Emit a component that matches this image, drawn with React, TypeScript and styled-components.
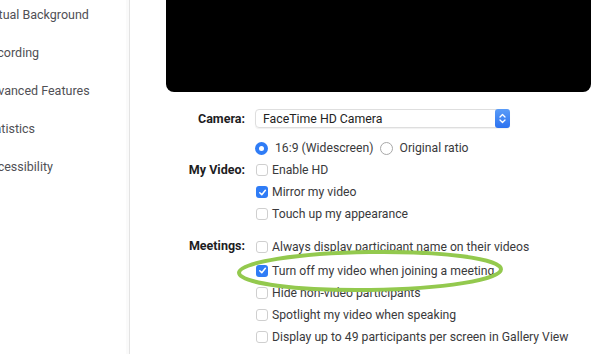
import React from "react";
import styled, { createGlobalStyle } from "styled-components";

const Global = createGlobalStyle`
  html, body { margin: 0; padding: 0; background: #ffffff; }
  body { width: 600px; height: 354px; overflow: hidden; font-family: Roboto, Inter, "Liberation Sans", sans-serif; }
  #root { width: 600px; height: 354px; }
`;

const Window = styled.div`
  display: flex;
  width: 600px;
  height: 354px;
  overflow: hidden;
  background: #fff;
`;

const Sidebar = styled.nav`
  width: 129px;
  flex: none;
  border-right: 1px solid #e3e3e3;
  overflow: hidden;
  box-shadow: inset -3px 0 0 #fafafa;
`;

const NavList = styled.ul`
  list-style: none;
  margin: -5px 0 0 -17px;
  padding: 0;
`;

const NavItem = styled.li`
  height: 38px;
  display: flex;
  align-items: center;
  font-size: 12.5px;
  color: #505055;
  white-space: nowrap;
`;

const Main = styled.main`
  position: relative;
  flex: 1;
  display: flex;
  flex-direction: column;
  padding-left: 36px;
  padding-right: 9px;
`;

const Preview = styled.div`
  height: 92px;
  background: #000;
  border-radius: 0 0 8px 8px;
`;

const Form = styled.div`
  display: grid;
  grid-template-columns: 79px 1fr;
  column-gap: 10px;
  margin-top: 16px;
  color: #333;
`;

const Label = styled.div<{ $top?: number }>`
  font-weight: 700;
  color: #1d1d1f;
  text-align: right;
  font-size: 12.5px;
  height: 22px;
  line-height: 22px;
  margin-top: ${(p) => p.$top ?? 0}px;
`;

const Controls = styled.div<{ $top?: number }>`
  display: flex;
  flex-direction: column;
  margin-top: ${(p) => p.$top ?? 0}px;
`;

const Select = styled.div`
  width: 255px;
  height: 19px;
  border: 1px solid #dedede;
  border-radius: 4px;
  display: flex;
  align-items: center;
  justify-content: space-between;
  padding-left: 7px;
  box-sizing: border-box;
  font-size: 12.3px;
  color: #222;
  box-shadow: 0 1px 1px rgba(0,0,0,0.06);
  margin: 1px 0 0;
`;

const Stepper = styled.div`
  width: 15px;
  height: 19px;
  margin-right: -1px;
  background: linear-gradient(#5a9cf8, #2c72f0);
  border-radius: 3px;
  display: flex;
  align-items: center;
  justify-content: center;
`;

const Row = styled.div<{ $h?: number }>`
  display: flex;
  align-items: center;
  height: ${(p) => p.$h ?? 22}px;
  white-space: nowrap;
  color: #3a3a3c;
  font-size: 12.2px;
`;

const Box = styled.span<{ $on?: boolean }>`
  width: 12px;
  height: 12px;
  box-sizing: border-box;
  border-radius: 3px;
  margin: 0 4px 0 1px;
  flex: none;
  display: flex;
  align-items: center;
  justify-content: center;
  border: ${(p) => (p.$on ? "none" : "1px solid #cfcfcf")};
  background: ${(p) => (p.$on ? "#2f7cf6" : "#fff")};
`;

const Radio = styled.span<{ $on?: boolean; $gap?: number }>`
  width: 13px;
  height: 13px;
  box-sizing: border-box;
  border-radius: 50%;
  margin: 0 7px 0 ${(p) => p.$gap ?? 0}px;
  flex: none;
  display: flex;
  align-items: center;
  justify-content: center;
  border: ${(p) => (p.$on ? "none" : "1px solid #a8a8a8")};
  background: ${(p) => (p.$on ? "#2f7cf6" : "#fff")};
  &::after {
    content: "";
    display: ${(p) => (p.$on ? "block" : "none")};
    width: 5px;
    height: 5px;
    border-radius: 50%;
    background: #fff;
  }
`;

const Highlight = styled.svg`
  position: absolute;
  left: 104px;
  top: 247px;
  width: 272px;
  height: 48px;
  pointer-events: none;
`;

const Check = () => (
  <svg width="9" height="9" viewBox="0 0 10 10">
    <path d="M2 5.3 L4.2 7.5 L8.2 2.5" fill="none" stroke="#fff" strokeWidth="1.7" strokeLinecap="round" strokeLinejoin="round" />
  </svg>
);

const CheckItem = ({ on, children, h }: { on?: boolean; children: React.ReactNode; h?: number }) => (
  <Row $h={h}>
    <Box $on={on}>{on && <Check />}</Box>
    {children}
  </Row>
);

export default function App() {
  return (
    <>
      <Global />
      <Window>
        <Sidebar>
          <NavList>
            <NavItem>Virtual Background</NavItem>
            <NavItem>Recording</NavItem>
            <NavItem>Advanced Features</NavItem>
            <NavItem>Statistics</NavItem>
            <NavItem>Accessibility</NavItem>
          </NavList>
        </Sidebar>
        <Main>
          <Preview />
          <Form>
            <Label>Camera:</Label>
            <Controls>
              <Select>
                FaceTime HD Camera
                <Stepper>
                  <svg width="7" height="11" viewBox="0 0 7 11">
                    <path d="M1 4 L3.5 1.5 L6 4 M1 7 L3.5 9.5 L6 7" fill="none" stroke="#fff" strokeWidth="1.3" strokeLinecap="round" strokeLinejoin="round" />
                  </svg>
                </Stepper>
              </Select>
            </Controls>
            <div />
            <Controls $top={7}>
              <Row>
                <Radio $on />
                16:9 (Widescreen)
                <Radio $gap={6} />
                Original ratio
              </Row>
            </Controls>
            <Label>My Video:</Label>
            <Controls>
              <CheckItem>Enable HD</CheckItem>
              <CheckItem on>Mirror my video</CheckItem>
              <CheckItem>Touch up my appearance</CheckItem>
            </Controls>
            <Label $top={10}>Meetings:</Label>
            <Controls $top={10}>
              <CheckItem h={24}>Always display participant name on their videos</CheckItem>
              <CheckItem h={23} on>Turn off my video when joining a meeting</CheckItem>
              <CheckItem h={22}>Hide non-video participants</CheckItem>
              <CheckItem h={22}>Spotlight my video when speaking</CheckItem>
              <CheckItem h={22}>Display up to 49 participants per screen in Gallery View</CheckItem>
            </Controls>
          </Form>
          <Highlight viewBox="0 0 272 48">
            <ellipse cx="136" cy="24" rx="131" ry="19" fill="none" stroke="#93c94e" strokeWidth="4" transform="rotate(-0.8 136 24)" />
          </Highlight>
        </Main>
      </Window>
    </>
  );
}
